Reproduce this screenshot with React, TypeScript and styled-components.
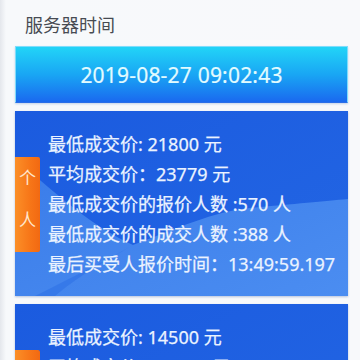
import styled, { createGlobalStyle } from "styled-components";

const GlobalStyle = createGlobalStyle`
  html, body {
    margin: 0;
    padding: 0;
    height: 100%;
    overflow: hidden;
  }
  body {
    background: linear-gradient(90deg, #e4e7ec 0, #f7f9fb 6px, #f8f9fb 100%);
    font-family: "Noto Sans", "Noto Sans CJK SC", sans-serif;
  }
`;

interface IPriceCard {
  tag: string;
  rows: string[];
}

const cards: IPriceCard[] = [
  {
    tag: "个人",
    rows: [
      "最低成交价: 21800 元",
      "平均成交价：23779 元",
      "最低成交价的报价人数 :570 人",
      "最低成交价的成交人数 :388 人",
      "最后买受人报价时间：13:49:59.197",
    ],
  },
  {
    tag: "单位",
    rows: [
      "最低成交价: 14500 元",
      "平均成交价：15562 元",
      "最低成交价的报价人数 :6 人",
      "最低成交价的成交人数 :6 人",
      "最后买受人报价时间：13:49:58.104",
    ],
  },
];

function Wave() {
  return (
    <WaveSvg viewBox="0 0 333 185" preserveAspectRatio="none">
      <defs>
        <linearGradient id="wave-top" x1="0" y1="0" x2="1" y2="1">
          <stop offset="0" stopColor="#1b5bdf" />
          <stop offset="1" stopColor="#2366e4" />
        </linearGradient>
        <linearGradient id="wave-low" x1="0" y1="0" x2="1" y2="1">
          <stop offset="0" stopColor="#3a7ce9" />
          <stop offset="1" stopColor="#4b8df1" />
        </linearGradient>
      </defs>
      <rect width="333" height="185" fill="url(#wave-top)" />
      <path
        d="M0,48 C30,72 70,112 118,134 C160,118 200,100 235,97 C280,93 310,90 333,88 V185 H0 Z"
        fill="url(#wave-low)"
      />
      <path
        d="M40,185 C70,160 100,145 118,134 C90,150 60,165 20,185 Z"
        fill="#2f72e6"
        opacity="0.6"
      />
    </WaveSvg>
  );
}

function PriceCard({ tag, rows }: IPriceCard) {
  return (
    <Card>
      <Wave />
      <Tag>
        {tag.split("").map((ch) => (
          <span key={ch}>{ch}</span>
        ))}
      </Tag>
      <Rows>
        {rows.map((row) => (
          <Row key={row}>{row}</Row>
        ))}
      </Rows>
    </Card>
  );
}

export default function App() {
  return (
    <>
      <GlobalStyle />
      <Page>
        <Title>服务器时间</Title>
        <TimeBox>2019-08-27 09:02:43</TimeBox>
        {cards.map((card) => (
          <PriceCard key={card.tag} tag={card.tag} rows={card.rows} />
        ))}
      </Page>
    </>
  );
}

const Page = styled.div`
  display: flex;
  flex-direction: column;
  gap: 8px;
  padding: 13px 12px 0 15px;
`;

const Title = styled.div`
  margin: 0 0 1px 10px;
  font-size: 18px;
  line-height: 24px;
  color: #474b52;
`;

const TimeBox = styled.div`
  display: flex;
  align-items: center;
  justify-content: center;
  height: 57px;
  box-sizing: border-box;
  border: 1px solid #7fdcfb;
  border-bottom-color: #2a6ee8;
  background: linear-gradient(180deg, #22d4f7 0%, #19a6f4 50%, #1a69ef 100%);
  box-shadow: 0 1px 2px rgba(40, 90, 170, 0.25);
  font-size: 21px;
  letter-spacing: 0.2px;
  color: #e2fbff;
  -webkit-text-stroke: 0.2px #e2fbff;
`;

const Card = styled.div`
  position: relative;
  display: flex;
  align-items: center;
  height: 185px;
  overflow: hidden;
  box-shadow: 0 1px 2px rgba(30, 70, 150, 0.3);
`;

const WaveSvg = styled.svg`
  position: absolute;
  inset: 0;
  width: 100%;
  height: 100%;
`;

const Tag = styled.div`
  position: relative;
  display: flex;
  flex-direction: column;
  align-items: center;
  gap: 24px;
  width: 25px;
  height: 95px;
  box-sizing: border-box;
  padding-top: 11px;
  margin-top: 1px;
  border-radius: 0 2px 2px 0;
  background: linear-gradient(90deg, #fb8f28 0%, #f77618 60%, #f26912 100%);
  font-family: "Noto Sans CJK SC", sans-serif;
  font-size: 17px;
  line-height: 18px;
  color: #ffe6cc;
`;

const Rows = styled.div`
  position: relative;
  display: flex;
  flex-direction: column;
  align-self: flex-start;
  padding: 18px 0 0 8px;
`;

const Row = styled.div`
  font-size: 18px;
  line-height: 30px;
  white-space: nowrap;
  color: #ebf3ff;
  -webkit-text-stroke: 0.25px #ebf3ff;
`;
